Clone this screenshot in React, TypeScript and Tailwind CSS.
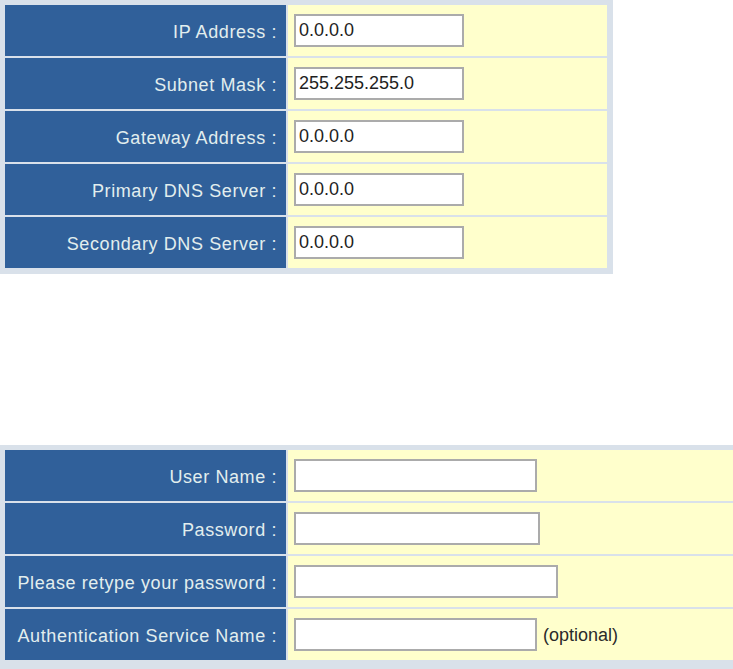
const font = { fontFamily: '"Liberation Sans", Arial, sans-serif' };

type Row = { label: string; value?: string; width: number; note?: string };

const lanRows: Row[] = [
  { label: 'IP Address :', value: '0.0.0.0', width: 170 },
  { label: 'Subnet Mask :', value: '255.255.255.0', width: 170 },
  { label: 'Gateway Address :', value: '0.0.0.0', width: 170 },
  { label: 'Primary DNS Server :', value: '0.0.0.0', width: 170 },
  { label: 'Secondary DNS Server :', value: '0.0.0.0', width: 170 },
];

const pppoeRows: Row[] = [
  { label: 'User Name :', width: 243 },
  { label: 'Password :', width: 246 },
  { label: 'Please retype your password :', width: 264 },
  { label: 'Authentication Service Name :', width: 243, note: '(optional)' },
];

const FormTable = ({ rows, className }: { rows: Row[]; className: string }) => {
  return (
    <div className={`bg-[#d9e1ea] pt-[5px] pl-[5px] flex flex-col gap-[2px] ${className}`}>
      {rows.map((row) => (
        <div key={row.label} className="flex gap-[2px] h-[51px]">
          <div className="w-[281px] shrink-0 bg-[#30609a] flex items-center justify-end pr-[9px] pt-[4px] text-[18px] tracking-[0.6px] text-[#e2eeee]">
            {row.label}
          </div>
          <div className="flex-1 bg-[#ffffcc] flex items-center pl-[6px] gap-[6px]">
            <input
              type="text"
              defaultValue={row.value}
              style={{ width: row.width, ...font }}
              className="h-[33px] bg-white border-2 border-[#ababab] px-[3px] text-[18px] text-[#1e1e1e] outline-none"
            />
            {row.note && <span className="text-[18px] text-[#2a2a2a] pt-[2px]">{row.note}</span>}
          </div>
        </div>
      ))}
    </div>
  );
};

export default function App() {
  return (
    <div className="min-h-screen bg-white" style={font}>
      {/* LAN settings */}
      <FormTable rows={lanRows} className="w-[613px] pr-[6px] pb-[6px]" />

      {/* PPPoE settings */}
      <FormTable rows={pppoeRows} className="w-[733px] mt-[171px] pb-[10px]" />
    </div>
  );
}
